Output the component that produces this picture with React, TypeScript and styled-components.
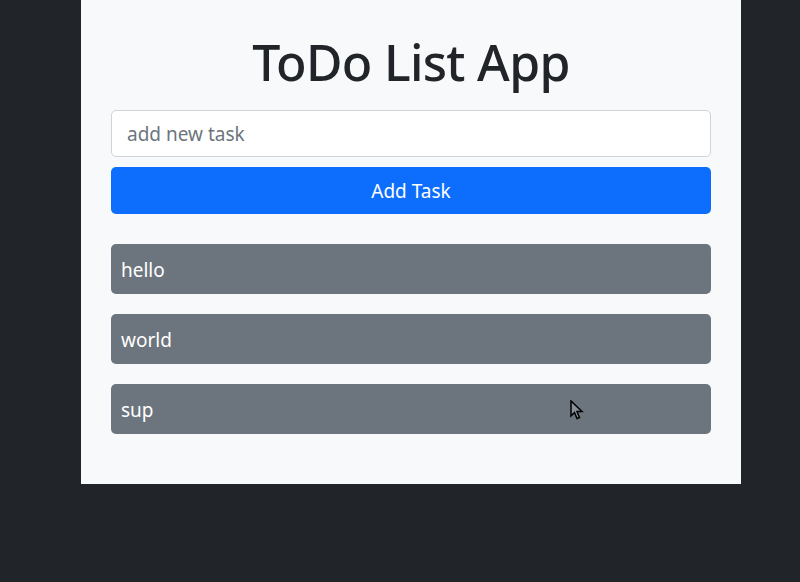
import { useState } from "react";
import styled, { createGlobalStyle } from "styled-components";

// ─── Global ───────────────────────────────────────────────────────────────────

const GlobalStyle = createGlobalStyle`
  * { box-sizing: border-box; }
  html, body {
    margin: 0;
    background: #212529;
    font-family: "Noto Sans", "Open Sans", sans-serif;
  }
`;

// ─── Styled components ────────────────────────────────────────────────────────

const Page = styled.main`
  min-height: 582px;
  padding-left: 81px;
`;

const Panel = styled.section`
  position: relative;
  width: 660px;
  background: #f8f9fa;
  padding: 26px 30px 30px;
  display: flex;
  flex-direction: column;
`;

const Title = styled.h1`
  margin: 0 0 12px;
  text-align: center;
  font-size: 50px;
  font-weight: 500;
  letter-spacing: -0.7px;
  line-height: 72px;
  color: #212529;
`;

const Input = styled.input`
  height: 47px;
  width: 100%;
  border: 1px solid #ced4da;
  border-radius: 5px;
  background: #fff;
  padding: 1px 15px 0;
  font-family: inherit;
  font-size: 19px;
  color: #212529;
  outline: none;

  &::placeholder { color: #6c757d; }
`;

const AddBtn = styled.button`
  margin-top: 10px;
  height: 47px;
  width: 100%;
  border: none;
  border-radius: 5px;
  background: #0d6efd;
  color: #fff;
  font-family: inherit;
  font-size: 19px;
  padding-top: 2px;
  cursor: pointer;
`;

const List = styled.ul`
  list-style: none;
  margin: 30px 0 0;
  padding: 0;
  display: flex;
  flex-direction: column;
  gap: 20px;
`;

const Item = styled.li`
  height: 50px;
  display: flex;
  align-items: center;
  padding: 2px 10px 0;
  border-radius: 5px;
  background: #6c757d;
  color: #fff;
  font-size: 19px;
`;

const Bottom = styled.div`
  height: 20px;
`;

const Cursor = styled.svg`
  position: absolute;
  left: 489px;
  top: 400px;
  pointer-events: none;
`;

// ─── Composant ────────────────────────────────────────────────────────────────

export default function App() {
  const [task, setTask] = useState("");
  const [tasks, setTasks] = useState<string[]>(["hello", "world", "sup"]);

  function addTask() {
    if (!task.trim()) return;
    setTasks(t => [...t, task.trim()]);
    setTask("");
  }

  return (
    <Page>
      <GlobalStyle />
      <Panel>
        <Title>ToDo List App</Title>
        <Input
          placeholder="add new task"
          value={task}
          onChange={e => setTask(e.target.value)}
        />
        <AddBtn onClick={addTask}>Add Task</AddBtn>
        <List>
          {tasks.map((t, i) => (
            <Item key={i}>{t}</Item>
          ))}
        </List>
        <Bottom />
        <Cursor width="14" height="22" viewBox="0 0 14 22">
          <path
            d="M1 1 L1 16 L4.5 12.5 L7 18.5 L9.5 17.5 L7 11.5 L12 11.5 Z"
            fill="#8a8f95"
            stroke="#000"
            strokeWidth="1.5"
            strokeLinejoin="miter"
          />
        </Cursor>
      </Panel>
    </Page>
  );
}
